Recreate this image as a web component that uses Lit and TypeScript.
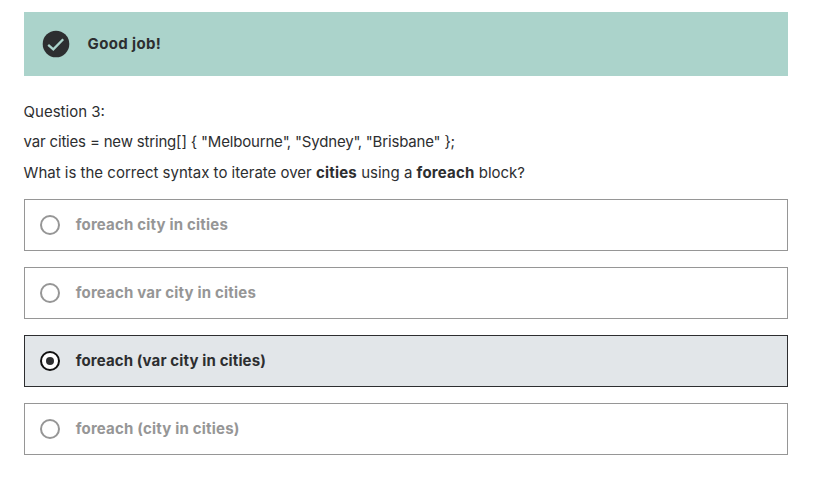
import { LitElement, html, svg, css } from "lit";
import { customElement, property } from "lit/decorators.js";

@customElement("answer-option")
class AnswerOption extends LitElement {
  @property() label = "";
  @property({ type: Boolean, reflect: true }) selected = false;

  static styles = css`
    :host {
      display: flex;
      align-items: center;
      gap: 15.7px;
      box-sizing: border-box;
      height: 52px;
      padding: 0 15px;
      border: 1px solid #969696;
      color: #969696;
      font-weight: 700;
      letter-spacing: 0.19px;
    }
    :host([selected]) {
      border-color: #2d2e30;
      background: #e2e6e9;
      color: #2d2e30;
      letter-spacing: 0.13px;
    }
    .radio {
      flex: none;
      width: 20px;
      height: 20px;
    }
    .ring {
      fill: #fff;
      stroke: #969696;
      stroke-width: 2;
    }
    :host([selected]) .ring {
      stroke: #111;
    }
    .dot {
      fill: #2d2e30;
    }
    .label {
      white-space: nowrap;
    }
  `;

  render() {
    return html`
      <svg class="radio" viewBox="0 0 20 20">
        <circle class="ring" cx="10" cy="10" r="9"></circle>
        ${this.selected ? svg`<circle class="dot" cx="10" cy="10" r="4"></circle>` : ""}
      </svg>
      <span class="label">${this.label}</span>
    `;
  }
}

@customElement("app-root")
class AppRoot extends LitElement {
  static styles = css`
    :host {
      display: block;
      box-sizing: border-box;
      height: 483px;
      padding: 12px 26px 0 24px;
      background: #fff;
      color: #2d2e30;
      font: 400 15px/24px Inter, sans-serif;
    }
    .banner {
      display: flex;
      align-items: center;
      gap: 17.6px;
      height: 64px;
      padding-left: 18px;
      background: #abd3cb;
      font-weight: 700;
      letter-spacing: 0.35px;
    }
    .check {
      width: 28px;
      height: 28px;
    }
    .question {
      padding-top: 21px;
      text-indent: -0.4px;
      white-space: nowrap;
    }
    .line {
      margin: 0;
      line-height: 30px;
    }
    .line:last-child {
      line-height: 32px;
    }
    .line b {
      letter-spacing: 0.2px;
    }
    .code {
      letter-spacing: -0.18px;
    }
    .tight {
      letter-spacing: -2.8px;
    }
    .options {
      display: grid;
      gap: 16px;
      margin-top: 10px;
    }
  `;

  private options = [
    "foreach city in cities",
    "foreach var city in cities",
    "foreach (var city in cities)",
    "foreach (city in cities)",
  ];

  render() {
    return html`
      <div class="banner">
        <svg class="check" viewBox="0 0 28 28">
          <circle cx="14" cy="14" r="13.3" fill="#2d2e30"></circle>
          <path d="M6.2 14.8 11.3 19.4 21.2 9.2" fill="none" stroke="#abd3cb" stroke-width="2.3"></path>
        </svg>
        <span>Good job!</span>
      </div>
      <div class="question">
        <p class="line">Question 3:</p>
        <p class="line code">var cities = new string[] { "Melbourne<span class="tight">"</span>, "Sydney<span class="tight">"</span>, "Brisbane" };</p>
        <p class="line">What is the correct syntax to iterate over <b>cities</b> using a <b>foreach</b> block?</p>
      </div>
      <div class="options">
        ${this.options.map((o, i) => html`<answer-option .label=${o} ?selected=${i === 2}></answer-option>`)}
      </div>
    `;
  }
}
